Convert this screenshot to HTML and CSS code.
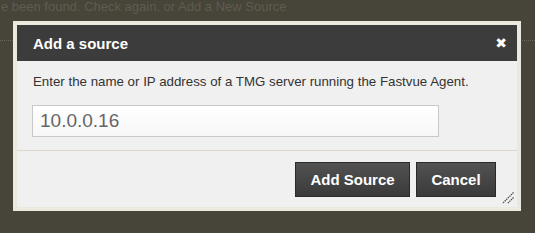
FILE: index.html
```html
<!DOCTYPE html>
<html>
<head>
<meta charset="utf-8">
<link rel="stylesheet" href="styles.css">
</head>
<body>
<div class="page">
  <p class="status">e been found. Check again. or Add a New Source</p>
  <div class="rule"></div>
</div>
<div class="dialog">
  <div class="dialog-inner">
    <div class="dialog-header">
      <span class="dialog-title">Add a source</span>
      <span class="dialog-close">&#10006;</span>
    </div>
    <div class="dialog-body">
      <p class="hint">Enter the name or IP address of a TMG server running the Fastvue Agent.</p>
      <input class="field" type="text" value="10.0.0.16">
    </div>
    <div class="dialog-footer">
      <button class="btn btn-add">Add Source</button>
      <button class="btn btn-cancel">Cancel</button>
    </div>
    <svg class="grip" width="12" height="12" viewBox="0 0 12 12">
      <path d="M11.5 0.5 L0.5 11.5 M11.5 5.5 L5.5 11.5" stroke="#444" stroke-width="1.2" stroke-dasharray="1.4 0.8" fill="none"/>
    </svg>
  </div>
</div>
</body>
</html>
```
FILE: styles.css
```css
html, body {
  margin: 0;
  padding: 0;
}
body {
  width: 535px;
  height: 233px;
  background: #47443a;
  font-family: "Liberation Sans", Arial, sans-serif;
  overflow: hidden;
  position: relative;
}
.status {
  margin: 0;
  padding: 0 0 0 1px;
  font-size: 13px;
  line-height: 14px;
  color: #5f5c4f;
}
.rule {
  margin-top: 26px;
  border-top: 1px dotted #6a6758;
  height: 0;
}
.dialog {
  position: absolute;
  left: 13px;
  top: 21px;
  width: 500px;
  height: 182px;
  border: 4px solid #ebe9df;
  background: #f0f0f0;
}
.dialog-inner {
  position: relative;
  height: 100%;
  display: flex;
  flex-direction: column;
}
.dialog-header {
  height: 36px;
  background: #3c3c3c;
  display: flex;
  align-items: center;
  justify-content: space-between;
  padding: 0 10px 0 16px;
  color: #fff;
}
.dialog-title {
  font-weight: bold;
  font-size: 15px;
}
.dialog-close {
  font-size: 14px;
  line-height: 14px;
  font-family: "DejaVu Sans", sans-serif;
  font-weight: bold;
}
.dialog-body {
  padding: 0 0 13px 15px;
  border-bottom: 1px solid #ddd8c8;
}
.hint {
  margin: 13px 0 0 1px;
  font-size: 13.3px;
  line-height: 16px;
  color: #333;
}
.field {
  display: block;
  box-sizing: border-box;
  margin: 15px 0 0 0;
  width: 407px;
  height: 32px;
  border: 1px solid #c8c8c8;
  background: linear-gradient(#ffffff, #f7f7f7);
  padding: 0 7px;
  font-family: "Liberation Sans", Arial, sans-serif;
  font-size: 19px;
  color: #666;
  outline: none;
}
.dialog-footer {
  display: flex;
  justify-content: flex-end;
  gap: 6px;
  padding: 11px 21px 0 0;
}
.btn {
  height: 35px;
  box-sizing: border-box;
  padding: 0;
  white-space: nowrap;
  border: 1px solid #2a2a2a;
  background: linear-gradient(#525252, #3a3a3a);
  color: #fff;
  font-family: "Liberation Sans", Arial, sans-serif;
  font-weight: bold;
  font-size: 15px;
}
.btn-add {
  width: 115px;
}
.btn-cancel {
  width: 80px;
}
.grip {
  position: absolute;
  right: 3px;
  bottom: 3px;
}
```
